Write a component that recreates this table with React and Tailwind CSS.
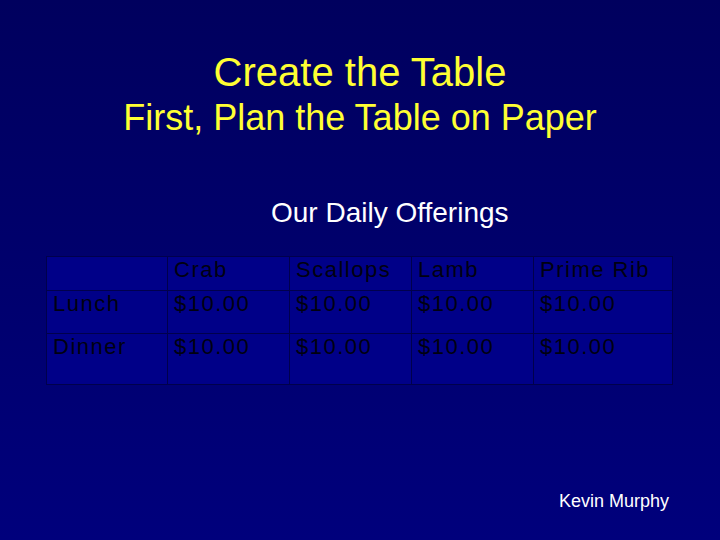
const cols = ["", "Crab", "Scallops", "Lamb", "Prime Rib"];
const rows = [
  { label: "Lunch", prices: ["$10.00", "$10.00", "$10.00", "$10.00"], h: "h-[42px]" },
  { label: "Dinner", prices: ["$10.00", "$10.00", "$10.00", "$10.00"], h: "h-[50px]" },
];
const widths = ["w-[121px]", "w-[122px]", "w-[122px]", "w-[122px]", "w-[140px]"];

const Cell = ({ children, i, h }) => (
  <div
    className={`${widths[i]} ${h} shrink-0 border-r border-[#00004c] last:border-r-0 pl-[6px] text-[22px] leading-[26px] tracking-[1.5px] text-[#000010]`}
  >
    {children}
  </div>
);

export default function App() {
  return (
    <div
      className="w-[720px] h-[540px] flex flex-col bg-linear-to-b from-[#00005e] to-[#00007c] overflow-hidden"
      style={{ fontFamily: '"Liberation Sans", Arial, sans-serif' }}
    >
      <div className="pt-[50px] flex flex-col items-center text-[#ffff33]">
        <h1 className="text-[40px] leading-[44px]">Create the Table</h1>
        <h2 className="mt-[3px] text-[36px] leading-[42px]">First, Plan the Table on Paper</h2>
      </div>

      <p className="mt-[58px] pl-[271px] text-[28px] leading-[32px] text-white">Our Daily Offerings</p>

      <div className="mt-[27px] ml-[46px] w-[627px] flex flex-col border border-[#00004c] bg-[#000088]">
        <div className="flex border-b border-[#00004c]">
          {cols.map((c, i) => (
            <Cell key={i} i={i} h="h-[33px]">
              {c}
            </Cell>
          ))}
        </div>
        {rows.map((r, ri) => (
          <div key={r.label} className={`flex ${ri === 0 ? "border-b border-[#00004c]" : ""}`}>
            <Cell i={0} h={r.h}>
              {r.label}
            </Cell>
            {r.prices.map((p, i) => (
              <Cell key={i} i={i + 1} h={r.h}>
                {p}
              </Cell>
            ))}
          </div>
        ))}
      </div>

      <div className="mt-auto mb-[28px] pr-[51px] flex justify-end">
        <span className="text-[18px] leading-[22px] text-white">Kevin Murphy</span>
      </div>
    </div>
  );
}
